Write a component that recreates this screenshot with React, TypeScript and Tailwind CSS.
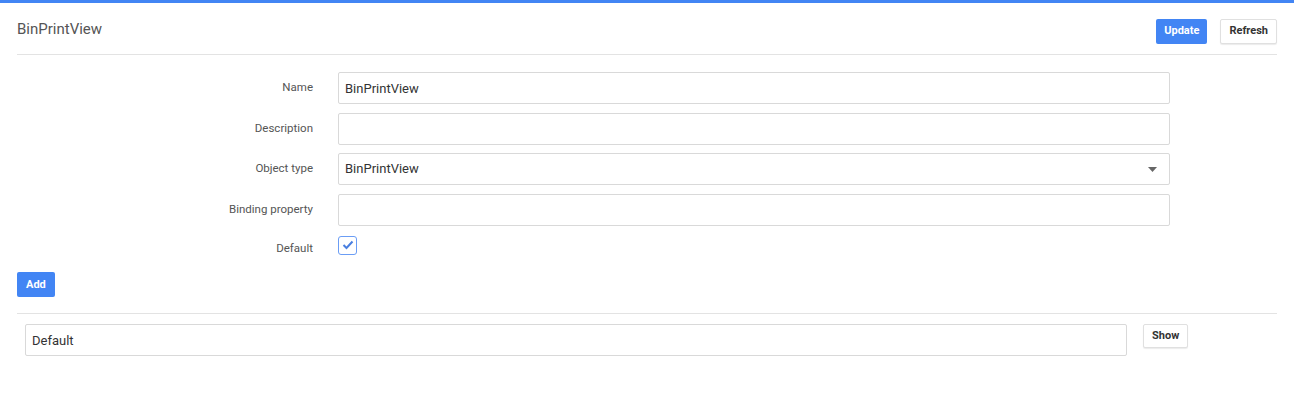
import React, { useState } from 'react';

const labelCls = 'w-[296px] shrink-0 text-right text-[11.5px] text-[#555]';
const inputCls =
  'w-[832px] h-[32px] border border-[#d9d9d9] rounded-[2px] px-[6px] text-[13px] text-[#333] outline-none bg-white';

const FormRow: React.FC<{ label: string; children: React.ReactNode }> = ({ label, children }) => (
  <div className="flex items-center gap-[25px]">
    <label className={labelCls}>{label}</label>
    {children}
  </div>
);

const App: React.FC = () => {
  const [name, setName] = useState('BinPrintView');
  const [description, setDescription] = useState('');
  const [binding, setBinding] = useState('');
  const [isDefault, setIsDefault] = useState(true);

  return (
    <div className="w-[1294px] h-[406px] bg-white font-['Roboto',sans-serif] border-t-[3px] border-[#4285f4]">
      <div className="px-[17px]">
        {/* header */}
        <div className="flex items-center justify-between h-[52px] border-b border-[#e3e3e3]">
          <h1 className="text-[15px] text-[#555] font-normal pt-[2px]">BinPrintView</h1>
          <div className="flex items-center gap-[13px] pt-[5px]">
            <button className="h-[25px] px-[8px] rounded-[2px] bg-[#4285f4] text-white text-[11px] font-bold">
              Update
            </button>
            <button className="h-[25px] px-[8px] rounded-[2px] bg-white border border-[#e0e0e0] shadow-[0_1px_1px_rgba(0,0,0,0.08)] text-[#333] text-[11px] font-bold">
              Refresh
            </button>
          </div>
        </div>

        {/* form */}
        <div className="flex flex-col gap-[8.5px] pt-[17px]">
          <FormRow label="Name">
            <input className={inputCls} value={name} onChange={(e) => setName(e.target.value)} />
          </FormRow>
          <FormRow label="Description">
            <input className={inputCls} value={description} onChange={(e) => setDescription(e.target.value)} />
          </FormRow>
          <FormRow label="Object type">
            <div className={inputCls + ' flex items-center justify-between pr-[12px]'}>
              <span>BinPrintView</span>
              <svg width="9" height="5" viewBox="0 0 9 5">
                <path d="M0 0 L9 0 L4.5 5 Z" fill="#666" />
              </svg>
            </div>
          </FormRow>
          <FormRow label="Binding property">
            <input className={inputCls} value={binding} onChange={(e) => setBinding(e.target.value)} />
          </FormRow>
          <div className="flex items-center gap-[25px] h-[22px]">
            <label className={labelCls + ' pt-[8px]'}>Default</label>
            <button
              onClick={() => setIsDefault(!isDefault)}
              className="w-[19px] h-[19px] rounded-[3px] border border-[#6b9df5] bg-white flex items-center justify-center"
            >
              {isDefault && (
                <svg width="12" height="10" viewBox="0 0 12 10">
                  <path d="M1.5 5 L4.5 8 L10.5 1.5" stroke="#4a7fe0" strokeWidth="2" fill="none" />
                </svg>
              )}
            </button>
          </div>
        </div>

        <div className="pt-[14.5px] pb-[16px] border-b border-[#e3e3e3]">
          <button className="h-[25px] px-[9px] rounded-[2px] bg-[#4285f4] text-white text-[11px] font-bold">
            Add
          </button>
        </div>

        {/* list */}
        <div className="flex items-start pt-[10px] pl-[8px]">
          <input
            className="w-[1102px] h-[32px] border border-[#d9d9d9] rounded-[2px] px-[6px] text-[13px] text-[#333] outline-none"
            defaultValue="Default"
          />
          <button className="ml-[16px] h-[24px] px-[8px] rounded-[2px] bg-white border border-[#e0e0e0] shadow-[0_1px_1px_rgba(0,0,0,0.08)] text-[#333] text-[11px] font-bold">
            Show
          </button>
        </div>
      </div>
    </div>
  );
};

export default App;
